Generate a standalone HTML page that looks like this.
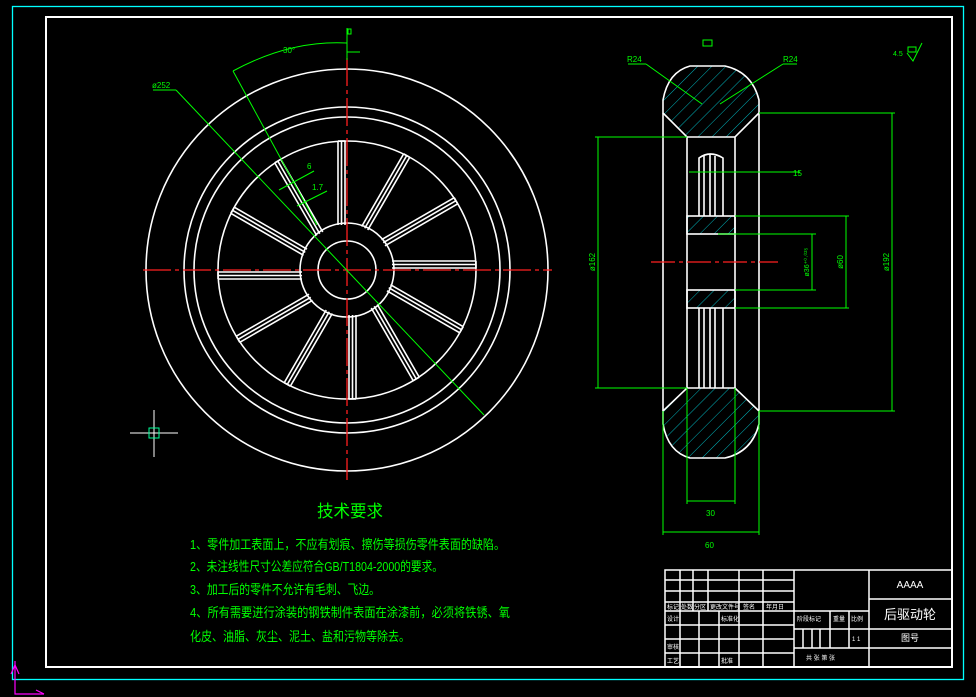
<!DOCTYPE html>
<html><head><meta charset="utf-8"><style>
html,body{margin:0;padding:0;background:#000;width:976px;height:697px;overflow:hidden}
svg{display:block}
text{font-family:"Liberation Sans","Noto Sans CJK SC",sans-serif}
</style></head><body>
<svg width="976" height="697" viewBox="0 0 976 697" xmlns="http://www.w3.org/2000/svg">
<defs>
<pattern id="h" patternUnits="userSpaceOnUse" width="10" height="10" patternTransform="rotate(45)">
<line x1="0" y1="0" x2="0" y2="10" stroke="#00c8d0" stroke-width="0.9"/>
</pattern>
<g id="sp" stroke="#fff" stroke-width="1.6" fill="none">
<line x1="392" y1="261" x2="476" y2="261"/>
<line x1="392" y1="264.5" x2="476" y2="264.5"/>
<line x1="392" y1="268" x2="476" y2="268"/>
<line x1="476" y1="261" x2="476" y2="268"/>
</g>
</defs>
<rect x="12.5" y="6.5" width="951" height="673" fill="none" stroke="#00ffff" stroke-width="1.3"/>
<rect x="46" y="17" width="906" height="650" fill="none" stroke="#fff" stroke-width="2"/>
<g stroke="#ff00ff" stroke-width="1.2" fill="none">
<polyline points="15,661 15,694 44,694"/><polyline points="11,674 15,665 19,674"/><line x1="36" y1="690" x2="44" y2="694"/>
</g>
<g stroke="#fff" stroke-width="1.6" fill="none">
<circle cx="347" cy="270" r="201"/>
<circle cx="347" cy="270" r="163"/>
<circle cx="347" cy="270" r="153"/>
<circle cx="347" cy="270" r="129"/>
<circle cx="347" cy="270" r="47"/>
<circle cx="347" cy="270" r="29"/>
</g>
<use href="#sp"/>
<use href="#sp" transform="rotate(30 347 270)"/>
<use href="#sp" transform="rotate(60 347 270)"/>
<use href="#sp" transform="rotate(90 347 270)"/>
<use href="#sp" transform="rotate(120 347 270)"/>
<use href="#sp" transform="rotate(150 347 270)"/>
<use href="#sp" transform="rotate(180 347 270)"/>
<use href="#sp" transform="rotate(210 347 270)"/>
<use href="#sp" transform="rotate(240 347 270)"/>
<use href="#sp" transform="rotate(270 347 270)"/>
<use href="#sp" transform="rotate(300 347 270)"/>
<use href="#sp" transform="rotate(330 347 270)"/>
<g stroke="#ff2020" stroke-width="1.3" stroke-dasharray="28,4,4,4">
<line x1="143" y1="270" x2="552" y2="270"/>
<line x1="347" y1="58" x2="347" y2="480"/>
</g>
<g stroke="#00ff00" stroke-width="1" fill="none">
<line x1="153" y1="90" x2="176" y2="90"/><line x1="176" y1="90" x2="484" y2="415"/>
<line x1="233" y1="71" x2="317" y2="225"/>
<path d="M233 71 Q290 40 347 43"/>
<line x1="347" y1="28" x2="347" y2="60"/><line x1="347" y1="52" x2="360" y2="52"/>
<line x1="279" y1="190" x2="314" y2="171"/><line x1="297" y1="206" x2="327" y2="191"/>
<rect x="348" y="29" width="3" height="5"/>
</g>
<g fill="#00ff00" font-size="8">
<text x="152" y="88">ø252</text><text x="283" y="53">30°</text><text x="307" y="169">6</text><text x="312" y="190">1.7</text>
</g>
<g stroke="#fff" stroke-width="1" fill="none"><line x1="154" y1="410" x2="154" y2="457"/><line x1="130" y1="433" x2="178" y2="433"/></g>
<rect x="149" y="428" width="10" height="10" fill="none" stroke="#00ff99" stroke-width="1"/>
<path d="M663 113 L663 100 Q668 72 690 66 L725 66 Q752 72 759 100 L759 113 L735 137 L687 137 Z" fill="url(#h)" stroke="#fff" stroke-width="1.6"/>
<path d="M663 411 L663 424 Q668 452 690 458 L725 458 Q752 452 759 424 L759 411 L735 388 L687 388 Z" fill="url(#h)" stroke="#fff" stroke-width="1.6"/>
<rect x="687" y="216" width="48" height="18" fill="url(#h)" stroke="#fff" stroke-width="1.6"/>
<rect x="687" y="290" width="48" height="18" fill="url(#h)" stroke="#fff" stroke-width="1.6"/>
<g stroke="#fff" stroke-width="1.6" fill="none">
<line x1="663" y1="113" x2="663" y2="411"/><line x1="759" y1="113" x2="759" y2="411"/>
<line x1="687" y1="137" x2="687" y2="388"/><line x1="735" y1="137" x2="735" y2="388"/>
<path d="M699 216 L699 158 Q710 150 723 158 L723 216"/>
<line x1="704" y1="156" x2="704" y2="216"/><line x1="710" y1="154" x2="710" y2="216"/><line x1="715" y1="156" x2="715" y2="216"/>
<line x1="699" y1="308" x2="699" y2="388"/><line x1="704" y1="308" x2="704" y2="388"/><line x1="710" y1="308" x2="710" y2="388"/><line x1="715" y1="308" x2="715" y2="388"/><line x1="723" y1="308" x2="723" y2="388"/>
</g>
<line x1="651" y1="262" x2="778" y2="262" stroke="#ff2020" stroke-width="1.3" stroke-dasharray="24,4,4,4"/>
<g stroke="#00ff00" stroke-width="1" fill="none">
<line x1="595" y1="137" x2="687" y2="137"/><line x1="595" y1="388" x2="687" y2="388"/><line x1="598" y1="137" x2="598" y2="388"/>
<line x1="759" y1="113" x2="895" y2="113"/><line x1="759" y1="411" x2="895" y2="411"/><line x1="892" y1="113" x2="892" y2="411"/>
<line x1="735" y1="216" x2="849" y2="216"/><line x1="735" y1="308" x2="849" y2="308"/><line x1="846" y1="216" x2="846" y2="308"/>
<line x1="718" y1="234" x2="816" y2="234"/><line x1="735" y1="290" x2="816" y2="290"/><line x1="812" y1="234" x2="812" y2="290"/>
<line x1="689" y1="172" x2="800" y2="172"/>
<line x1="663" y1="411" x2="663" y2="535"/><line x1="759" y1="411" x2="759" y2="535"/><line x1="663" y1="532" x2="759" y2="532"/>
<line x1="687" y1="388" x2="687" y2="504"/><line x1="735" y1="388" x2="735" y2="504"/><line x1="687" y1="501" x2="735" y2="501"/>
<line x1="628" y1="64" x2="646" y2="64"/><line x1="646" y1="64" x2="702" y2="104"/>
<line x1="783" y1="64" x2="797" y2="64"/><line x1="783" y1="64" x2="720" y2="104"/>
<rect x="703" y="40" width="9" height="6"/>
<rect x="908" y="47" width="8" height="5"/><polyline points="907,53 913,61 922,43"/>
</g>
<g fill="#00ff00" font-size="8">
<text x="627" y="62">R24</text><text x="783" y="62">R24</text><text x="793" y="176">15</text>
<text x="706" y="516">30</text><text x="705" y="548">60</text>
<text transform="translate(595 262) rotate(-90)" text-anchor="middle">ø162</text>
<text transform="translate(889 262) rotate(-90)" text-anchor="middle">ø192</text>
<text transform="translate(843 262) rotate(-90)" text-anchor="middle">ø60</text>
<text transform="translate(809 262) rotate(-90)" text-anchor="middle" font-size="7">ø36⁺⁰·⁰²⁵</text>
<text x="893" y="56" font-size="7">4.5</text>
</g>
<g fill="#00ff00">
<text x="317" y="517" font-size="17" textLength="66" lengthAdjust="spacingAndGlyphs">技术要求</text>
<g font-size="13">
<text x="190" y="549" textLength="315" lengthAdjust="spacingAndGlyphs">1、零件加工表面上，不应有划痕、擦伤等损伤零件表面的缺陷。</text>
<text x="190" y="571" textLength="253" lengthAdjust="spacingAndGlyphs">2、未注线性尺寸公差应符合GB/T1804-2000的要求。</text>
<text x="190" y="594" textLength="190" lengthAdjust="spacingAndGlyphs">3、加工后的零件不允许有毛刺、飞边。</text>
<text x="190" y="617" textLength="320" lengthAdjust="spacingAndGlyphs">4、所有需要进行涂装的钢铁制件表面在涂漆前，必须将铁锈、氧</text>
<text x="190" y="641" textLength="220" lengthAdjust="spacingAndGlyphs">化皮、油脂、灰尘、泥土、盐和污物等除去。</text>
</g>
</g>
<g stroke="#fff" stroke-width="1.5" fill="none">
<rect x="665" y="570" width="287" height="97"/>
<line x1="665" y1="580" x2="794" y2="580"/><line x1="665" y1="591" x2="794" y2="591"/><line x1="665" y1="602" x2="794" y2="602"/>
<line x1="665" y1="611" x2="869" y2="611"/><line x1="665" y1="625" x2="794" y2="625"/><line x1="665" y1="639" x2="794" y2="639"/><line x1="665" y1="653" x2="794" y2="653"/>
<line x1="680" y1="570" x2="680" y2="667"/><line x1="693" y1="570" x2="693" y2="611"/><line x1="708" y1="570" x2="708" y2="611"/>
<line x1="739" y1="570" x2="739" y2="667"/><line x1="763" y1="570" x2="763" y2="667"/>
<line x1="699" y1="611" x2="699" y2="667"/><line x1="719" y1="611" x2="719" y2="667"/>
<line x1="794" y1="570" x2="794" y2="667"/><line x1="869" y1="570" x2="869" y2="667"/>
<line x1="794" y1="629" x2="952" y2="629"/><line x1="794" y1="648" x2="952" y2="648"/><line x1="869" y1="599" x2="952" y2="599"/>
<line x1="830" y1="611" x2="830" y2="648"/><line x1="849" y1="611" x2="849" y2="648"/>
<line x1="803" y1="629" x2="803" y2="648"/><line x1="812" y1="629" x2="812" y2="648"/><line x1="820" y1="629" x2="820" y2="648"/>
</g>
<g fill="#fff" font-size="6">
<text x="667" y="609">标记</text><text x="681" y="609">处数</text><text x="694" y="609">分区</text><text x="710" y="609">更改文件号</text><text x="743" y="609">签名</text><text x="766" y="609">年月日</text>
<text x="667" y="621">设计</text><text x="721" y="621">标准化</text><text x="667" y="649">审核</text><text x="667" y="663">工艺</text><text x="721" y="663">批准</text>
<text x="797" y="621">阶段标记</text><text x="833" y="621">重量</text><text x="851" y="621">比例</text>
<text x="852" y="641">1 1</text><text x="806" y="660">共 张 第 张</text>
</g>
<g fill="#fff" text-anchor="middle">
<text x="910" y="588" font-size="10">AAAA</text>
<text x="910" y="619" font-size="13">后驱动轮</text>
<text x="910" y="641" font-size="9">图号</text>
</g>
</svg>
</body></html>
